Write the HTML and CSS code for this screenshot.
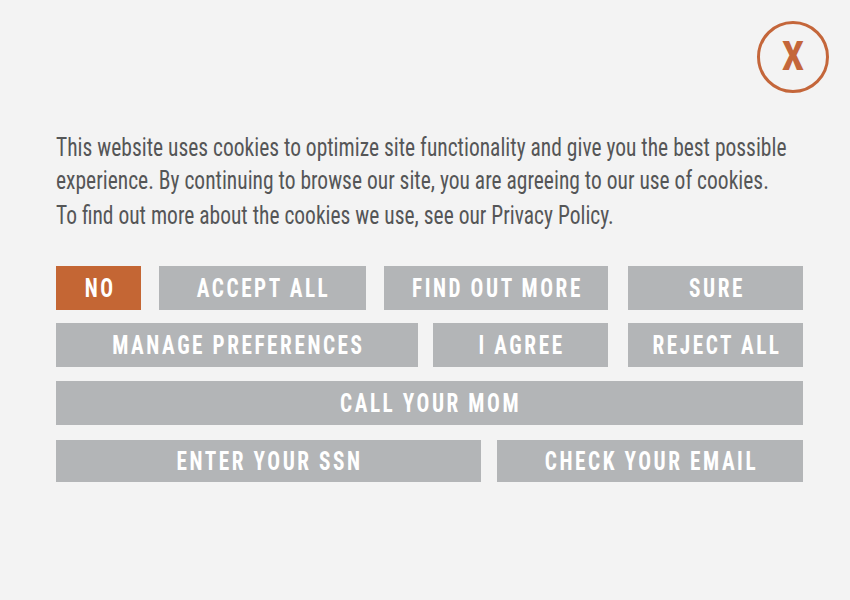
FILE: index.html
```
<!DOCTYPE html>
<html lang="en">
<head>
<meta charset="utf-8">
<title>Cookies</title>
<link rel="stylesheet" href="styles.css">
</head>
<body>
<div class="page">
  <header class="top">
    <button class="close" type="button" aria-label="Close">X</button>
  </header>
  <p class="notice">This website uses cookies to optimize site functionality and give you the best possible<br>experience. By continuing to browse our site, you are agreeing to our use of cookies.<br>To find out more about the cookies we use, see our Privacy Policy.</p>
  <div class="buttons">
    <div class="row">
      <button class="btn btn-orange w-no" type="button"><span class="label">NO</span></button>
      <button class="btn w-accept" type="button"><span class="label">ACCEPT ALL</span></button>
      <button class="btn w-find" type="button"><span class="label">FIND OUT MORE</span></button>
      <button class="btn w-175" type="button"><span class="label">SURE</span></button>
    </div>
    <div class="row row-2">
      <button class="btn w-manage" type="button"><span class="label">MANAGE PREFERENCES</span></button>
      <button class="btn w-175" type="button"><span class="label">I AGREE</span></button>
      <button class="btn w-175" type="button"><span class="label">REJECT ALL</span></button>
    </div>
    <div class="row row-3">
      <button class="btn w-full" type="button"><span class="label">CALL YOUR MOM</span></button>
    </div>
    <div class="row row-4">
      <button class="btn w-ssn" type="button"><span class="label">ENTER YOUR SSN</span></button>
      <button class="btn w-email" type="button"><span class="label">CHECK YOUR EMAIL</span></button>
    </div>
  </div>
</div>
</body>
</html>
```
FILE: styles.css
```
html, body {
  margin: 0;
  padding: 0;
  background: #f3f3f3;
  overflow: hidden;
}

.page {
  width: 850px;
  height: 600px;
  box-sizing: border-box;
  padding: 21px 21px 0 56px;
  font-family: "Roboto Condensed", "Roboto", "Liberation Sans", sans-serif;
}

.top {
  display: flex;
  justify-content: flex-end;
}

.close {
  width: 72px;
  height: 72px;
  box-sizing: border-box;
  border: 3px solid #c4663a;
  border-radius: 50%;
  background: transparent;
  color: #c4663a;
  font-family: "Roboto Condensed", "Roboto", sans-serif;
  font-weight: 700;
  font-size: 40px;
  line-height: 1;
  padding: 0;
  display: flex;
  align-items: center;
  justify-content: center;
}

/* narrow type: set small, then stretched vertically to the full height */
.notice {
  margin: 37px 0 0 0;
  width: 747px;
  font-size: 21.5px;
  line-height: 27.4px;
  color: #555657;
  white-space: nowrap;
  transform: scaleY(1.2326);
  transform-origin: left top;
}

.buttons {
  width: 747px;
  margin-top: 54px;
  display: flex;
  flex-direction: column;
}

.row {
  display: flex;
  gap: 18px;
}

.row > .btn:last-child {
  margin-left: auto;
}

.row-2 {
  gap: 15px;
  margin-top: 13px;
}

.row-3 {
  margin-top: 14px;
}

.row-4 {
  gap: 16px;
  margin-top: 15px;
}

.btn {
  height: 44px;
  border: 0;
  padding: 0;
  margin: 0;
  background: #b3b5b7;
  color: #ffffff;
  font-family: "Roboto Condensed", "Roboto", sans-serif;
  font-weight: 700;
  font-size: 25px;
  letter-spacing: 3px;
  display: flex;
  align-items: center;
  justify-content: center;
  overflow: hidden;
  white-space: nowrap;
}

.row-4 .btn {
  height: 42px;
}

.btn-orange {
  background: #c46634;
}

.label {
  display: inline-block;
  transform: scaleX(0.85);
  margin-right: -3px;
}

.w-no { width: 85px; }
.w-accept { width: 207px; }
.w-find { width: 224px; }
.w-175 { width: 175px; }
.w-manage { width: 362px; }
.w-full { width: 747px; }
.w-ssn { width: 425px; }
.w-email { width: 306px; }
```
